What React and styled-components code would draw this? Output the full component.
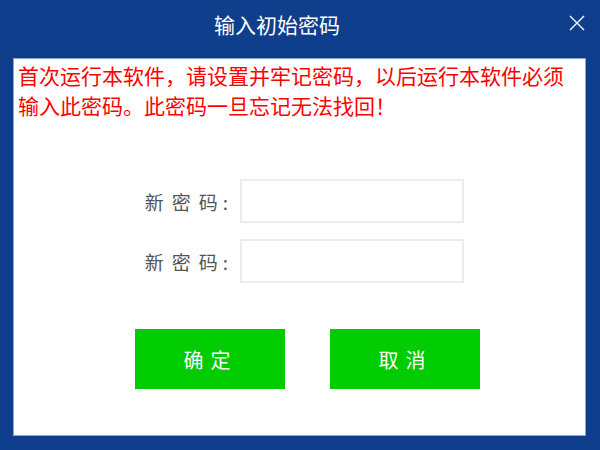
import React from 'react'
import styled, { createGlobalStyle } from 'styled-components'

const GlobalStyle = createGlobalStyle`
  html, body {
    margin: 0;
    padding: 0;
    background: #0f3e8c;
  }
  body {
    font-family: "Noto Sans CJK SC", "Noto Sans", sans-serif;
  }
`

const Dialog = styled.div`
  width: 600px;
  height: 450px;
  background: #0f3e8c;
  display: flex;
  flex-direction: column;
  box-sizing: border-box;
`

const TitleBar = styled.div`
  height: 59px;
  display: flex;
  align-items: center;
`

const Title = styled.div`
  flex: 1;
  text-align: center;
  color: #ffffff;
  font-size: 21px;
  padding-bottom: 12px;
`

const CloseButton = styled.button`
  width: 46px;
  height: 59px;
  padding: 0 0 14px;
  border: none;
  background: transparent;
  display: flex;
  align-items: center;
  justify-content: center;
  cursor: pointer;
`

const Panel = styled.div`
  margin: 0 15px 0 14px;
  height: 376px;
  background: #ffffff;
  box-shadow: 0 0 0 1px #8aa3c9;
  box-sizing: border-box;
  padding-top: 1px;
`

const Notice = styled.p`
  margin: 0;
  padding: 0 4px;
  color: #ff0000;
  font-size: 21px;
  line-height: 30px;
`

const Form = styled.div`
  margin: 59px 0 0 128px;
  display: flex;
  flex-direction: column;
  gap: 16px;
`

const Row = styled.label`
  display: flex;
  align-items: center;
  gap: 12px;
`

const Label = styled.span`
  width: 86px;
  text-align: right;
  color: #555555;
  font-size: 19px;
  letter-spacing: 8px;

  &::after {
    content: ':';
    letter-spacing: 0;
    margin-left: -3px;
  }
`

const Input = styled.input`
  width: 224px;
  height: 44px;
  box-sizing: border-box;
  border: 2px solid #ececec;
  outline: none;
  padding: 0 8px;
  font-size: 16px;
`

const Buttons = styled.div`
  margin: 46px 0 0 121px;
  display: flex;
  gap: 45px;
`

const Button = styled.button`
  width: 150px;
  height: 60px;
  border: none;
  background: #00cc00;
  color: #ffffff;
  font-family: inherit;
  font-size: 20px;
  letter-spacing: 7px;
  padding-left: 7px;
  cursor: pointer;
`

export default function App() {
  const [pwd, setPwd] = React.useState('')
  const [pwd2, setPwd2] = React.useState('')

  return (
    <>
      <GlobalStyle />
      <Dialog>
        <TitleBar>
          <Title>输入初始密码</Title>
          <CloseButton aria-label="关闭">
            <svg width="16" height="16" viewBox="0 0 16 16">
              <path d="M1 1 L15 15 M15 1 L1 15" stroke="#ffffff" strokeWidth="1.4" fill="none" />
            </svg>
          </CloseButton>
        </TitleBar>
        <Panel>
          <Notice>
            首次运行本软件，请设置并牢记密码，以后运行本软件必须输入此密码。此密码一旦忘记无法找回！
          </Notice>
          <Form>
            <Row>
              <Label>新密码</Label>
              <Input type="password" value={pwd} onChange={(e) => setPwd(e.target.value)} />
            </Row>
            <Row>
              <Label>新密码</Label>
              <Input type="password" value={pwd2} onChange={(e) => setPwd2(e.target.value)} />
            </Row>
          </Form>
          <Buttons>
            <Button>确定</Button>
            <Button>取消</Button>
          </Buttons>
        </Panel>
      </Dialog>
    </>
  )
}
